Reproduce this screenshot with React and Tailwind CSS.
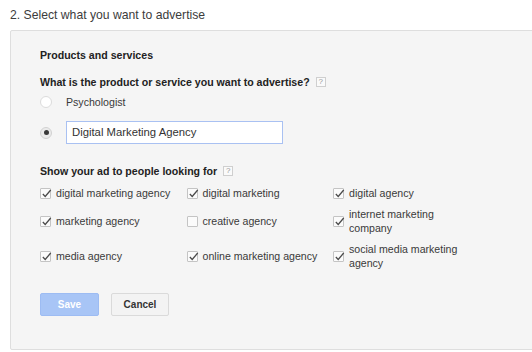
import React from "react";

const keywords = [
  { label: "digital marketing agency", checked: true },
  { label: "digital marketing", checked: true },
  { label: "digital agency", checked: true },
  { label: "marketing agency", checked: true },
  { label: "creative agency", checked: false },
  { label: "internet marketing company", checked: true },
  { label: "media agency", checked: true },
  { label: "online marketing agency", checked: true },
  { label: "social media marketing agency", checked: true },
];

function HelpIcon() {
  return (
    <span className="ml-[6px] inline-flex h-[10px] w-[10px] items-center justify-center border border-[#cfcfcf] bg-[#fafafa] text-[8px] font-normal leading-none text-[#999]">
      ?
    </span>
  );
}

function Checkbox({ checked }) {
  return (
    <span className="relative h-[11px] w-[11px] shrink-0 rounded-[1px] border border-[#c4c4c4] bg-[#fbfbfb]">
      {checked && (
        <svg
          viewBox="0 0 12 12"
          className="absolute left-[0px] top-[-1px] h-[11px] w-[11px]"
          fill="none"
          stroke="#4a4a4a"
          strokeWidth="1.4"
        >
          <path d="M2 6.5 L4.6 9.2 L10.6 2.2" />
        </svg>
      )}
    </span>
  );
}

function Radio({ checked }) {
  return (
    <span
      className={
        "flex h-[12px] w-[12px] shrink-0 items-center justify-center rounded-full border " +
        (checked ? "border-[#d2d2d2] bg-[#ebebeb]" : "border-[#dcdcdc] bg-white")
      }
    >
      {checked && <span className="h-[5px] w-[5px] rounded-full bg-[#3a3a3a]" />}
    </span>
  );
}

export default function App() {
  return (
    <div className="h-[352px] w-[532px] overflow-hidden bg-white font-['Liberation_Sans',Arial,sans-serif]">
      <div className="pl-[10px] pt-[8px] text-[12.2px] leading-[14px] text-[#3c3c3c]">
        2. Select what you want to advertise
      </div>

      <div className="ml-[10px] mt-[8px] h-[320px] w-[540px] rounded-[2px] border border-[#dedede] bg-[#f5f5f5] pl-[29px] pt-[17px]">
        <div className="text-[10.6px] font-bold leading-[14px] text-[#222]">Products and services</div>

        <div className="mt-[13px] flex items-center text-[10.6px] font-bold leading-[14px] text-[#222]">
          What is the product or service you want to advertise?
          <HelpIcon />
        </div>

        <div className="mt-[6px] flex h-[14px] items-center">
          <Radio />
          <span className="ml-[14px] text-[10.6px] leading-[14px] text-[#3a3a3a]">Psychologist</span>
        </div>

        <div className="mt-[12px] flex items-center">
          <Radio checked />
          <div className="ml-[14px] flex h-[23px] w-[217px] items-center border border-[#a9c1f2] bg-white pl-[5px] text-[11.3px] text-[#333]">
            Digital Marketing Agency
          </div>
        </div>

        <div className="mt-[20px] flex items-center text-[10.6px] font-bold leading-[14px] text-[#222]">
          Show your ad to people looking for
          <HelpIcon />
        </div>

        <div className="mt-[8px] grid grid-cols-[146.5px_146.5px_146.5px] items-center gap-y-[7px]">
          {keywords.map((k, i) => (
            <div key={i} className={"flex items-center gap-[5px] " + (i >= 3 ? "min-h-[28px]" : "")}>
              <Checkbox checked={k.checked} />
              <span className="w-[118px] text-[10.6px] leading-[14px] text-[#3a3a3a]">{k.label}</span>
            </div>
          ))}
        </div>

        <div className="mt-[23px] flex gap-[12px]">
          <button className="h-[23px] w-[59px] rounded-[2px] border border-[#9dbcf3] bg-[#a8c5f6] text-[10px] font-bold text-white">
            Save
          </button>
          <button className="h-[23px] w-[58px] rounded-[2px] border border-[#dadada] bg-[#f3f3f3] text-[10px] font-bold text-[#333]">
            Cancel
          </button>
        </div>
      </div>
    </div>
  );
}
